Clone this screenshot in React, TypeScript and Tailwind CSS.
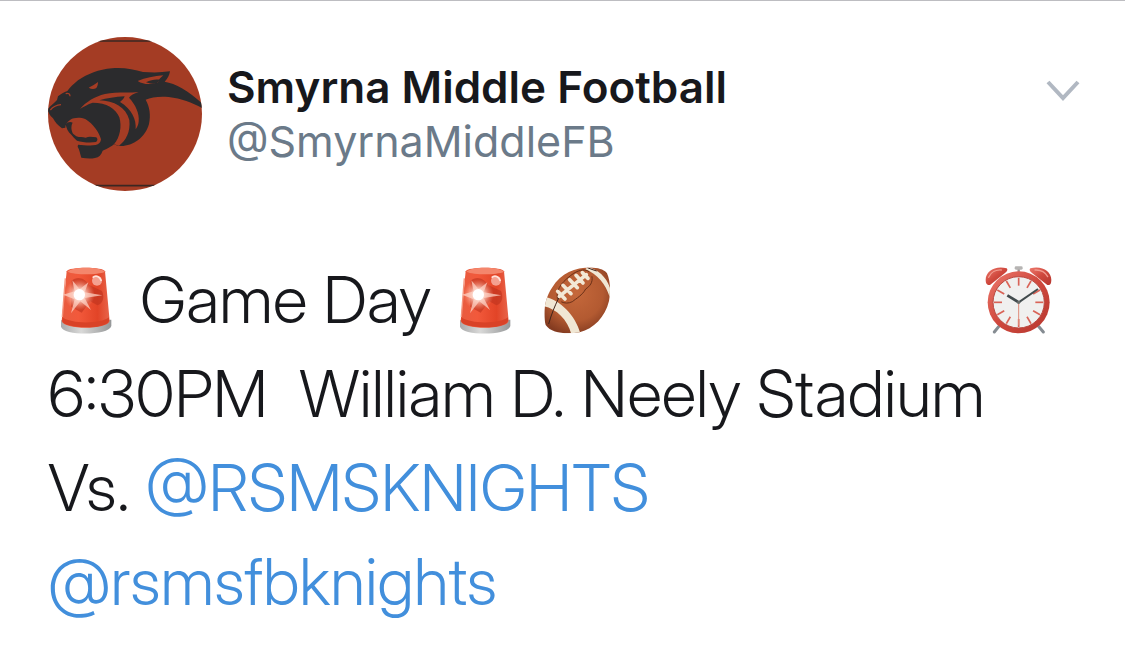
const RAYS = [0, 30, 60, 90, 120, 150, 180, 210, 240, 270, 300, 330];

const Avatar = () => {
    return (
        <svg className="w-[154px] h-[154px] shrink-0 rounded-full" viewBox="24 21 462 462" role="img" aria-label="Smyrna Middle Football">
            <rect x="24" y="21" width="462" height="462" fill="#a43c24" />
            <path d="M24 33H486M24 467H486" stroke="#3a2722" strokeWidth="5" />
            <path
                fill="#2b2b2d"
                d="M24 236C34 226 42 219 51 210L54 199C62 192 72 187 82 183C90 172 101 162 114 151C143 132 176 118 216 115C252 112 282 119 309 126C338 128 364 128 390 124C388 136 383 146 374 155C406 160 446 183 486 220V234C456 218 424 205 386 201C358 198 334 202 317 209C329 230 333 256 327 282C316 322 280 348 243 348C235 348 228 346 222 343C206 355 196 359 188 362C184 374 177 382 165 384C150 387 138 385 124 383C120 371 119 360 113 350L114 344C130 345 151 348 167 345C176 343 183 337 183 328C176 304 160 283 137 268C120 261 102 263 91 269C79 277 76 285 76 293L66 295C54 287 45 277 39 265C32 260 28 252 24 244Z"
            />
            <path
                fill="#a43c24"
                d="M120 237C137 216 164 200 195 192C225 185 263 188 296 187C281 190 272 196 267 203C286 223 299 250 296 275C295 285 291 292 287 298C289 268 276 238 240 216C247 211 252 205 254 199C225 201 200 204 178 211C222 212 258 232 268 270C272 305 258 332 237 347L222 343C240 322 246 290 238 262C228 236 200 218 158 218C143 223 131 230 120 237Z"
            />
            <path fill="#a43c24" d="M293 153C316 144 342 138 370 136C362 143 356 149 354 157C334 164 312 165 293 153Z" />
            <path fill="#2b2b2d" d="M318 157C334 148 348 147 360 149L350 160C340 162 328 161 318 157Z" />
            <path fill="#a43c24" d="M146 173C155 169 164 163 174 156C174 164 172 171 168 175C160 178 153 177 146 173Z" />
            <path d="M31 240C41 228 49 225 63 224M77 191C86 188 90 192 90 199" fill="none" stroke="#a43c24" strokeWidth="4" />
            <path fill="#2b2b2d" d="M77 283C82 276 91 274 98 278C92 288 94 302 99 311L109 319C119 323 127 320 137 323C149 318 158 322 169 322C174 327 173 333 168 336C149 339 127 337 111 332C103 325 98 318 94 314C84 307 79 294 77 283Z" />
        </svg>
    );
};

const Siren = () => {
    return (
        <svg className="w-[68px] h-[68px] shrink-0" viewBox="36 33 204 204" role="img" aria-label="Siren">
            <defs>
                <linearGradient id="dome">
                    <stop offset="0" stopColor="#e85c40" />
                    <stop offset=".35" stopColor="#f2593b" />
                    <stop offset=".75" stopColor="#e24427" />
                    <stop offset="1" stopColor="#e8654b" />
                </linearGradient>
                <linearGradient id="base">
                    <stop offset="0" stopColor="#a9aaab" />
                    <stop offset=".4" stopColor="#d9d9d8" />
                    <stop offset="1" stopColor="#959798" />
                </linearGradient>
                <radialGradient id="glow">
                    <stop offset="0" stopColor="#fff" />
                    <stop offset=".35" stopColor="#ffe6dc" stopOpacity=".85" />
                    <stop offset="1" stopColor="#ff9b80" stopOpacity="0" />
                </radialGradient>
            </defs>
            <path d="M63 196V215C69 243 207 243 214 213V194Z" fill="url(#base)" />
            <path d="M80 49C84 35 190 35 195 49L209 198C204 225 70 225 65 198Z" fill="url(#dome)" />
            <path d="M82 50C104 60 172 61 195 50C179 34 99 34 82 50Z" fill="#f4866c" />
            <path d="M95 77C113 61 135 70 148 90L186 108C194 127 190 145 172 151L151 139L125 173L93 155Z" fill="#bd321e" opacity=".6" />
            <path d="M67 187C93 207 181 208 207 187V198C202 222 72 222 67 198Z" fill="#d94227" />
            <path d="M76 70L67 186" stroke="#f5947d" strokeWidth="4" />
            <circle cx="171" cy="77" r="15" fill="#f4a090" />
            <path d="M158 68C167 59 180 64 184 78" fill="none" stroke="#ffe2da" strokeWidth="5" />
            <circle cx="118" cy="119" r="46" fill="url(#glow)" />
            <path d="M97 76L119 103L145 82L134 112L187 121L134 129L153 165L121 139L93 175L104 133L69 119L104 109Z" fill="#ffd7cb" opacity=".7" />
            <circle cx="118" cy="119" r="17" fill="#fff" />
        </svg>
    );
};

const Football = () => {
    return (
        <svg className="w-[68px] h-[68px] shrink-0" viewBox="27 33 204 204" role="img" aria-label="Football">
            <defs>
                <radialGradient id="leather" cx=".48" cy=".4" r=".62">
                    <stop offset="0" stopColor="#c5683b" />
                    <stop offset=".65" stopColor="#b35a31" />
                    <stop offset="1" stopColor="#843b20" />
                </radialGradient>
                <clipPath id="ball">
                    <path d="M35 210C27 180 30 132 54 98C83 52 128 36 178 38C198 39 214 46 219 55C228 75 231 107 225 138C213 187 179 221 137 232C100 238 52 236 35 210Z" />
                </clipPath>
            </defs>
            <g clipPath="url(#ball)">
                <path d="M27 33H231V237H27Z" fill="url(#leather)" />
                <path d="M32 125C78 135 125 181 139 235L112 238C101 193 66 160 28 153Z" fill="#f0e7d4" />
                <path d="M162 36C195 45 223 70 232 113L227 126C215 87 190 58 154 43Z" fill="#f0e7d4" />
                <path d="M44 207C52 178 62 154 74 129M160 38C170 42 178 45 188 48" fill="none" stroke="#40251b" strokeWidth="3" />
                <path d="M70 130C65 98 91 75 119 55C138 44 154 41 165 50M174 65C177 83 168 93 155 102C145 121 127 130 115 140C103 146 92 145 83 141" fill="none" stroke="#693018" strokeWidth="3" strokeLinecap="round" />
            </g>
            <path d="M76 124L157 59M71 109L93 132M87 91L111 116M107 74L130 98M126 61L147 84M145 53L162 70" fill="none" stroke="#f2e8d5" strokeWidth="11" strokeLinecap="round" />
        </svg>
    );
};

const AlarmClock = () => {
    return (
        <svg className="w-[68px] h-[68px] shrink-0" viewBox="33 33 204 204" role="img" aria-label="Alarm clock">
            <defs>
                <linearGradient id="rim" x2="1" y2="1">
                    <stop offset="0" stopColor="#ed796d" />
                    <stop offset=".5" stopColor="#cf483d" />
                    <stop offset="1" stopColor="#b6372f" />
                </linearGradient>
            </defs>
            <path d="M77 211L61 231M191 211L208 231" stroke="#858c92" strokeWidth="9" strokeLinecap="round" />
            <path d="M82 68L91 80M184 68L175 80M134 40V52" stroke="#9a8f8e" strokeWidth="7" />
            <rect x="122" y="34" width="24" height="10" rx="4" fill="#b6b4b3" />
            <path d="M36 83C29 53 60 30 98 40C103 45 98 50 93 54L48 90C42 91 38 88 36 83Z" fill="url(#rim)" />
            <path d="M231 83C238 53 207 30 169 40C164 45 169 50 174 54L220 90C226 91 230 88 231 83Z" fill="url(#rim)" />
            <path d="M44 67C51 50 68 44 82 45M183 45C200 44 214 52 221 65" fill="none" stroke="#f19a8e" strokeWidth="4" strokeLinecap="round" />
            <circle cx="134" cy="142" r="93" fill="url(#rim)" />
            <circle cx="134" cy="142" r="77" fill="#f0f0ef" stroke="#b94a42" strokeWidth="3" />
            {RAYS.map((angle) => (
                <path key={angle} d="M134 68V92" stroke="#d96357" strokeWidth="5" transform={`rotate(${angle} 134 142)`} />
            ))}
            <path d="M134 143V211" stroke="#df8b7a" strokeWidth="3" />
            <path d="M100 121L134 142" stroke="#424b4d" strokeWidth="8" />
            <path d="M134 142L192 102" stroke="#424b4d" strokeWidth="6" />
            <circle cx="134" cy="142" r="5" fill="#696d6b" />
        </svg>
    );
};

const App = () => {
    return (
        <article className="min-h-screen bg-white border-t border-[#bdbdc1] px-12 pt-9 pb-4 font-['Inter',sans-serif] text-[#17181c]">
            <header className="flex items-center">
                <Avatar />
                <div className="ml-[25px] text-[43px] leading-[54px]">
                    <h1 className="text-[44px] font-semibold">Smyrna Middle Football</h1>
                    <a href="#profile" className="block text-[#6b7a89]">@SmyrnaMiddleFB</a>
                </div>
                <button className="ml-auto -mr-1 mb-12 p-0" aria-label="More options">
                    <svg className="w-9 h-6" viewBox="0 0 36 24" fill="none" stroke="#b1b8c2" strokeWidth="4">
                        <path d="M3 4L18 20L33 4" />
                    </svg>
                </button>
            </header>
            <div className="mt-[62px] text-[65px] leading-[94px] font-light font-['Inter_Display','Inter',sans-serif]">
                <div className="flex items-center pl-1 pr-6">
                    <Siren />
                    <span className="mx-5">Game Day</span>
                    <Siren />
                    <span className="ml-6 flex"><Football /></span>
                    <span className="ml-auto flex"><AlarmClock /></span>
                </div>
                <p className="whitespace-pre-wrap">6:30PM  William D. Neely Stadium</p>
                <p>Vs. <a href="#rsmsknights" className="text-[#428fdc]">@RSMSKNIGHTS</a></p>
                <p><a href="#rsmsfbknights" className="text-[#428fdc]">@rsmsfbknights</a></p>
            </div>
        </article>
    );
};

export default App;
